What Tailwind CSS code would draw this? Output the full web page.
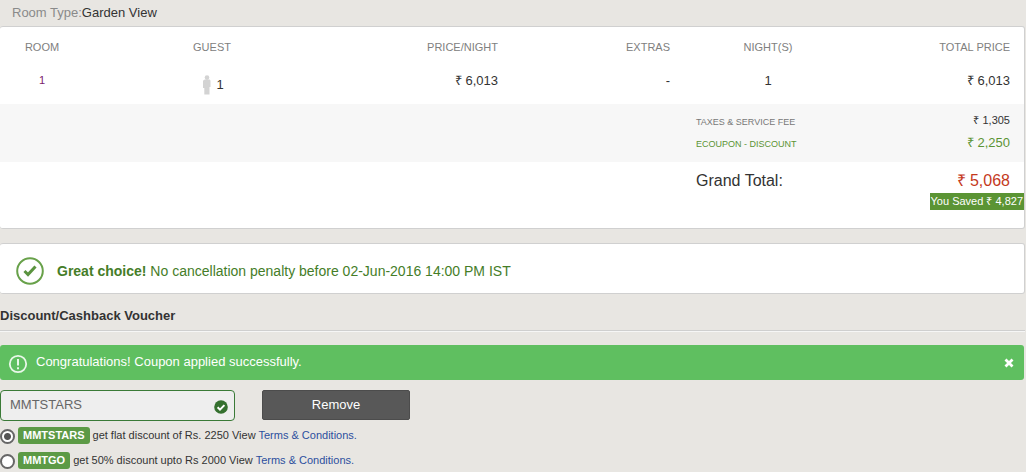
<!DOCTYPE html>
<html lang="en">
<head>
<meta charset="utf-8">
<meta name="viewport" content="width=device-width, initial-scale=1">
<title>Booking summary</title>
<script src="https://cdn.jsdelivr.net/npm/@tailwindcss/browser@4"></script>
</head>
<body class="min-h-screen bg-white pr-[5px] font-['Liberation_Sans',Arial,sans-serif] text-[13px] text-[#333]">
<main class="min-h-screen bg-[#e8e6e2] pr-px">

  <h1 class="h-[26px] pl-3 text-[13px] leading-[26px]"><span class="text-[#8a8a8a]">Room Type:</span>Garden View</h1>

  <section class="overflow-hidden rounded-[3px] border-y border-r border-[#d0d0d0] bg-white pb-[18px]">
    <table class="w-full table-fixed border-collapse">
      <colgroup>
        <col class="w-[84px]"><col class="w-[25%]"><col class="w-[170px]"><col class="w-[172px]"><col class="w-[172px]"><col>
      </colgroup>
      <thead>
        <tr class="h-[40px] align-middle text-[11px] text-[#808080]">
          <th class="font-normal">ROOM</th>
          <th class="font-normal">GUEST</th>
          <th class="pr-3 text-right font-normal">PRICE/NIGHT</th>
          <th class="pr-3 text-right font-normal">EXTRAS</th>
          <th class="font-normal">NIGHT(S)</th>
          <th class="pr-3.5 text-right font-normal">TOTAL PRICE</th>
        </tr>
      </thead>
      <tbody>
        <tr class="h-[37px] align-top leading-[28px]">
          <td class="text-center text-[11px] leading-[26px] text-[#7b1b6b]">1</td>
          <td>
            <div class="flex items-center justify-center gap-1 pt-1">
              <svg class="h-5 w-3" viewBox="0 0 12 20" fill="#d3d3d3" aria-label="Guest"><circle cx="7" cy="2.600" r="2.300"/><path d="M5 4.500h4c1 0 1.500.6 1.500 1.500V12H9.500v7.500H4.300V13H3V6.500C3 5.300 4 4.500 5 4.500z"/></svg>
              <span>1</span>
            </div>
          </td>
          <td class="pr-3 text-right">₹ 6,013</td>
          <td class="pr-3 text-right">-</td>
          <td class="text-center">1</td>
          <td class="pr-3.5 text-right">₹ 6,013</td>
        </tr>
        <tr class="h-[29px] bg-[#f7f7f7] align-top">
          <td colspan="4"></td>
          <td class="pt-3 pl-3.5 text-[9px] leading-3 whitespace-nowrap text-[#777]">TAXES &amp; SERVICE FEE</td>
          <td class="pt-2 pr-3.5 text-right text-[11px] leading-4">₹ 1,305</td>
        </tr>
        <tr class="h-[29px] bg-[#f7f7f7] align-top text-[#5b9434]">
          <td colspan="4"></td>
          <td class="pt-1 pl-3.5 text-[9px] leading-[14px] whitespace-nowrap">ECOUPON - DISCOUNT</td>
          <td class="pr-3.5 text-right leading-5">₹ 2,250</td>
        </tr>
        <tr class="align-top">
          <td colspan="4"></td>
          <td class="pt-2 pl-3.5 text-[16px] leading-[22px]">Grand Total:</td>
          <td class="pt-2 text-right">
            <p class="pr-3.5 text-[16px] leading-[22px] text-[#c4391d]">₹ 5,068</p>
            <p class="mt-px ml-auto w-fit bg-[#5b9434] px-px text-[11px] leading-[17px] text-white">You Saved ₹ 4,827</p>
          </td>
        </tr>
      </tbody>
    </table>
  </section>

  <section class="mt-3.5 flex h-[51px] items-center gap-[13px] rounded-[3px] border-y border-r border-[#d0d0d0] bg-white pt-1 pl-4 text-[14px] text-[#457d28]">
    <svg class="size-7" viewBox="0 0 28 28" fill="none" stroke="#68a14a"><circle cx="14" cy="14" r="12.800" stroke-width="2"/><path d="M8.500 14l3.500 3.500 7.500-8" stroke="#5b9440" stroke-width="3"/></svg>
    <p class="leading-6"><strong>Great choice!</strong> No cancellation penalty before 02-Jun-2016 14:00 PM IST</p>
  </section>

  <h2 class="mt-2 h-[29px] border-b border-[#cfcfcf] text-[13px] leading-[28px] font-bold shadow-[0_1px_0_#f6f6f6]"><label for="coupon">Discount/Cashback Voucher</label></h2>

  <div role="status" class="mt-3.5 mr-px flex h-[35px] items-center rounded-[3px] bg-[#5fbf60] pr-2.5 pl-2 text-white">
    <svg class="mt-0.5 size-5" viewBox="0 0 20 20" fill="none" stroke="#e9f7e9" stroke-width="1.800"><circle cx="10" cy="10" r="8.200"/><path d="M10 5v6.500M10 13.300v2" stroke-width="2"/></svg>
    <p class="ml-2 pb-0.5">Congratulations! Coupon applied successfully.</p>
    <button type="button" aria-label="Close" class="ml-auto flex"><svg class="size-[10px]" viewBox="0 0 10 10" stroke="#fff" stroke-width="2.800"><path d="M1.500 1.500l7 7M8.500 1.500l-7 7"/></svg></button>
  </div>

  <form class="mt-2.5">
    <div class="flex gap-[27px]">
      <div class="relative w-[235px]">
        <input id="coupon" type="text" value="MMTSTARS" class="h-[31px] w-full rounded-[4px] border border-[#3a7a37] bg-[#eee] pr-8 pb-0.5 pl-[9px] text-[13px] text-[#666]">
        <svg class="absolute top-2.5 right-[7px] size-[14px]" viewBox="0 0 14 14" fill="none"><circle cx="7" cy="7" r="6.800" fill="#35702f"/><path d="M3.600 7.200l2.400 2.400 4.400-4.500" stroke="#fff" stroke-width="2"/></svg>
      </div>
      <button type="button" class="h-[30px] w-[148px] rounded-[2px] border border-[#4c4c4c] bg-[#585858] text-[13px] text-white">Remove</button>
    </div>
    <div class="mt-1.5 flex h-[17px] items-center text-[11px]">
      <input id="c1" type="radio" name="offer" checked class="mt-0.5 size-[15px] shrink-0 appearance-none rounded-full border-2 border-[#666] bg-white bg-[radial-gradient(circle,#555_3px,transparent_4px)]">
      <label for="c1" class="ml-[3px] rounded-[3px] bg-[#5c9a45] px-[5px] leading-[17px] font-bold text-white">MMTSTARS</label>
      <p class="ml-[3px]">get flat discount of Rs. 2250 View <a href="#" class="text-[#2c4f9e]">Terms &amp; Conditions.</a></p>
    </div>
    <div class="mt-2 flex h-[17px] items-center text-[11px]">
      <input id="c2" type="radio" name="offer" class="mt-0.5 size-[15px] shrink-0 appearance-none rounded-full border-2 border-[#666] bg-white">
      <label for="c2" class="ml-[3px] rounded-[3px] bg-[#5c9a45] px-[5px] leading-[17px] font-bold text-white">MMTGO</label>
      <p class="ml-[3px]">get 50% discount upto Rs 2000 View <a href="#" class="text-[#2c4f9e]">Terms &amp; Conditions.</a></p>
    </div>
  </form>
</main>
</body>
</html>
